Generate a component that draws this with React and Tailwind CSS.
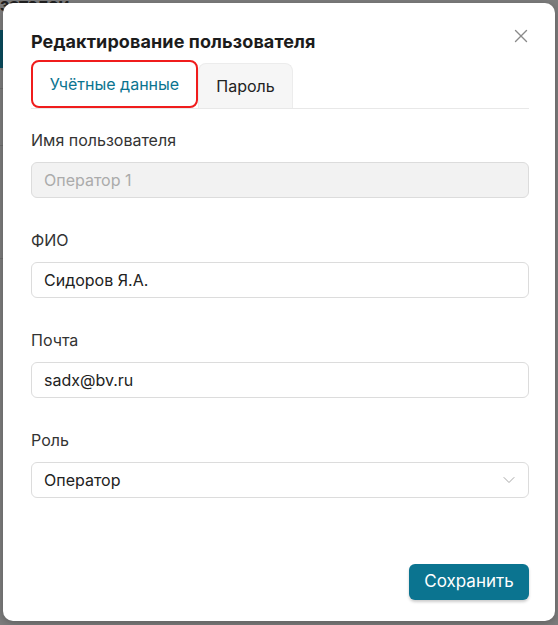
import React, { useState } from 'react';
import { X, ChevronDown } from 'lucide-react';

export default function App() {
  const [tab, setTab] = useState('account');

  return (
    <div className="relative w-[558px] h-[625px] overflow-hidden bg-[#7d7d7d] font-['Inter','Liberation_Sans',sans-serif]">
      {/* Page behind the overlay */}
      <div className="absolute -top-[9px] left-0 text-[18px] font-bold text-[#222] tracking-tight">зателей</div>
      <div className="absolute top-[30px] left-0 w-[6px] h-[38px] bg-[#0a4c5e]"></div>
      <div className="absolute top-[88px] left-0 w-[6px] h-px bg-[#6e6e6e]"></div>
      <div className="absolute top-[145px] left-0 w-[6px] h-px bg-[#6e6e6e]"></div>
      <div className="absolute top-[258px] left-0 w-[6px] h-px bg-[#6e6e6e]"></div>

      {/* Dialog */}
      <div className="relative ml-[3px] mt-[3px] w-[552px] h-[618px] bg-white rounded-[10px] shadow-[0_2px_8px_rgba(0,0,0,0.25)] pl-[28px] pr-[26px] pt-[27px] flex flex-col">
        <button className="absolute top-[22px] right-[23px] text-[#8a8a8a]">
          <X className="w-[22px] h-[22px]" strokeWidth={1.5} />
        </button>

        <h2 className="text-[18px] leading-[24px] font-bold text-[#1c1c1c] tracking-[0.1px]">Редактирование пользователя</h2>

        <div className="mt-[7px] flex items-end border-b border-[#e8e8e8] h-[48px]">
          <button
            onClick={() => setTab('account')}
            className="h-[48px] w-[167px] rounded-[8px] border-2 border-[#f01c1c] bg-white text-[16px] text-[#0b7490] flex items-center justify-center"
          >
            Учётные данные
          </button>
          <button
            onClick={() => setTab('password')}
            className="h-[45px] w-[95px] rounded-t-[8px] border border-b-0 border-[#ececec] bg-[#f6f6f6] text-[16px] text-[#222] flex items-center justify-center"
          >
            Пароль
          </button>
        </div>

        <div className="mt-[21px] flex flex-col">
          <label className="text-[16px] leading-[20px] text-[#333]">Имя пользователя</label>
          <input
            disabled
            value="Оператор 1"
            readOnly
            className="mt-[12px] h-[36px] rounded-[6px] border border-[#dcdcdc] bg-[#f2f2f2] px-[12px] text-[16px] text-[#ababab] outline-none"
          />

          <label className="mt-[32px] text-[16px] leading-[20px] text-[#333]">ФИО</label>
          <input
            defaultValue="Сидоров Я.А."
            className="mt-[12px] h-[36px] rounded-[6px] border border-[#dcdcdc] bg-white px-[12px] text-[16px] text-[#222] outline-none"
          />

          <label className="mt-[32px] text-[16px] leading-[20px] text-[#333]">Почта</label>
          <input
            defaultValue="sadx@bv.ru"
            className="mt-[12px] h-[36px] rounded-[6px] border border-[#dcdcdc] bg-white px-[12px] text-[16px] text-[#222] outline-none"
          />

          <label className="mt-[32px] text-[16px] leading-[20px] text-[#333]">Роль</label>
          <div className="mt-[12px] h-[36px] rounded-[6px] border border-[#dcdcdc] bg-white pl-[12px] pr-[9px] flex items-center justify-between">
            <span className="text-[16px] text-[#222]">Оператор</span>
            <ChevronDown className="w-[20px] h-[20px] text-[#a8a8a8]" strokeWidth={1.2} />
          </div>
        </div>

        <div className="mt-auto mb-[21px] flex justify-end">
          <button className="h-[36px] w-[120px] rounded-[6px] bg-[#0b7490] text-white text-[17px] shadow-[0_2px_3px_rgba(0,0,0,0.2)]">
            Сохранить
          </button>
        </div>
      </div>
    </div>
  );
}
